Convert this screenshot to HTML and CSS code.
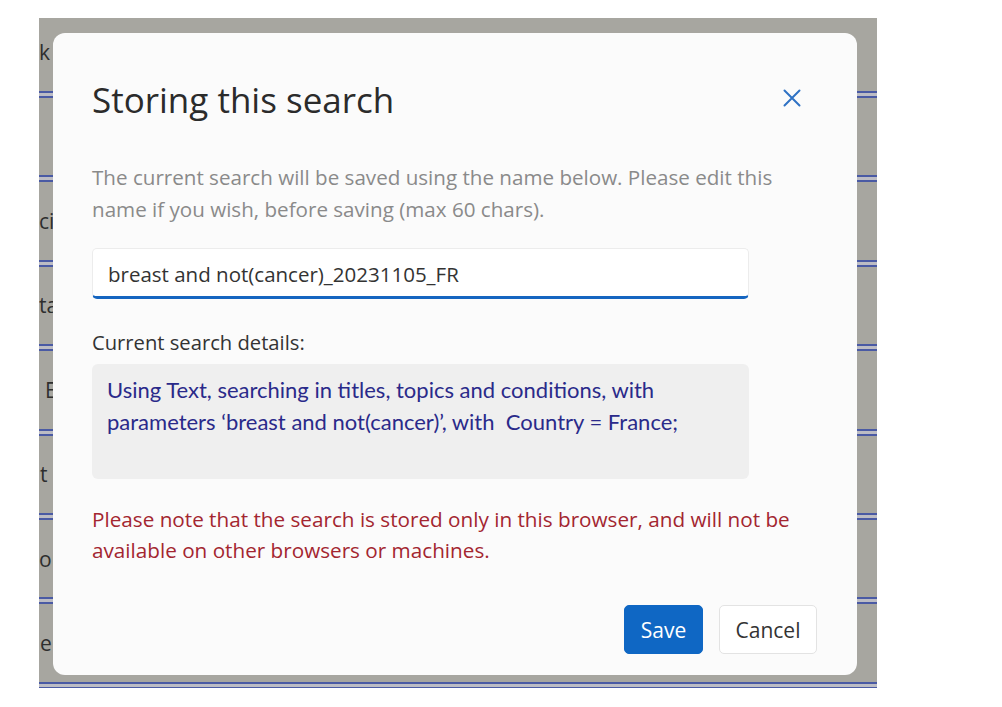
FILE: index.html
```html
<!DOCTYPE html>
<html lang="en">
<head>
<meta charset="utf-8">
<title>Storing this search</title>
<link rel="stylesheet" href="styles.css">
</head>
<body>
<div class="backdrop">
  <div class="bg-row first"><span class="bg-text k">k</span></div>
  <div class="rule"></div>
  <div class="bg-row"></div>
  <div class="rule"></div>
  <div class="bg-row"><span class="bg-text">ci</span></div>
  <div class="rule"></div>
  <div class="bg-row"><span class="bg-text">ta</span></div>
  <div class="rule"></div>
  <div class="bg-row"><span class="bg-text e">E</span></div>
  <div class="rule"></div>
  <div class="bg-row"><span class="bg-text t">t</span></div>
  <div class="rule"></div>
  <div class="bg-row"><span class="bg-text on">on</span></div>
  <div class="rule"></div>
  <div class="bg-row"><span class="bg-text t">e<i class="mark"></i></span></div>
  <div class="rule"></div>

  <div class="modal" role="dialog" aria-labelledby="dlg-title">
    <div class="modal-head">
      <h2 id="dlg-title" class="modal-title">Storing this search</h2>
      <button class="close-btn" aria-label="Close">
        <svg width="20" height="20" viewBox="0 0 20 20"><path d="M2.5 2.5 L17.5 17.5 M17.5 2.5 L2.5 17.5" stroke="#2f72c4" stroke-width="2" fill="none" stroke-linecap="round"/></svg>
      </button>
    </div>
    <p class="intro">The current search will be saved using the name below. Please edit this name if you wish, before saving (max 60 chars).</p>
    <input class="name-input" type="text" value="breast and not(cancer)_20231105_FR" maxlength="60">
    <div class="details-label">Current search details:</div>
    <div class="details-box">Using Text, searching in titles, topics and conditions, with parameters ‘breast and not(cancer)’, with&nbsp; Country = France;</div>
    <p class="note">Please note that the search is stored only in this browser, and will not be available on other browsers or machines.</p>
    <div class="actions">
      <button class="btn btn-primary">Save</button>
      <button class="btn btn-secondary">Cancel</button>
    </div>
  </div>
</div>
</body>
</html>
```

FILE: styles.css
```css
html, body {
  margin: 0;
  padding: 0;
  background: #ffffff;
}
body {
  padding: 18px 0 0 39px;
  font-family: "Open Sans", "Noto Sans", "Liberation Sans", sans-serif;
}
.backdrop {
  position: relative;
  width: 838px;
  height: 670px;
  overflow: hidden;
  background: #a7a6a0;
}
.bg-row {
  height: 77.4px;
  display: flex;
  align-items: center;
  font-size: 21px;
  color: #2e2e2e;
  white-space: nowrap;
}
.bg-row.first {
  height: 73px;
}
.bg-text {
  display: inline-block;
}
.bg-text.k {
  margin-top: -6px;
}
.bg-text.e {
  padding-left: 6px;
}
.bg-text.t {
  padding-left: 1px;
}
.mark {
  display: inline-block;
  width: 4px;
  height: 14px;
  margin-left: 2px;
  background: #b9a46a;
}
.rule {
  height: 3px;
  border-top: 2px solid #4a5aa4;
  border-bottom: 2px solid #4a5aa4;
  background: #bcbcc4;
}
.modal {
  position: absolute;
  left: 14px;
  top: 15px;
  width: 804px;
  height: 642px;
  box-sizing: border-box;
  background: #fbfbfb;
  border-radius: 12px;
  padding: 43px 40px 21px 39px;
  display: flex;
  flex-direction: column;
  color: #333333;
}
.modal-head {
  display: flex;
  align-items: center;
  justify-content: space-between;
  padding-right: 15px;
}
.modal-title {
  margin: 0;
  font-size: 35px;
  line-height: 47px;
  font-weight: 400;
  color: #2b2b2b;
}
.close-btn {
  border: 0;
  background: transparent;
  padding: 0;
  width: 20px;
  height: 20px;
  margin-top: -3px;
  cursor: pointer;
}
.intro {
  margin: 38px 0 0;
  font-size: 20.6px;
  line-height: 32px;
  color: #8a8a8a;
  width: 710px;
}
.name-input {
  margin-top: 23px;
  width: 657px;
  height: 51px;
  box-sizing: border-box;
  border: 1px solid #ececec;
  border-bottom: 3px solid #1565c0;
  border-radius: 5px;
  background: #ffffff;
  padding: 2px 15px 0;
  font-family: inherit;
  font-size: 20.5px;
  color: #333333;
  outline: none;
}
.details-label {
  margin-top: 27px;
  font-size: 20.2px;
  line-height: 32px;
  color: #333333;
}
.details-box {
  margin-top: 6px;
  width: 657px;
  height: 115px;
  box-sizing: border-box;
  padding: 10px 15px;
  background: #efefef;
  border-radius: 6px;
  font-family: "Lato", "Open Sans", sans-serif;
  font-size: 22px;
  line-height: 32px;
  color: #2a2a8a;
}
.note {
  margin: 25px 0 0;
  font-size: 20.7px;
  line-height: 31px;
  color: #a32630;
  width: 730px;
}
.actions {
  margin-top: auto;
  display: flex;
  justify-content: flex-end;
  gap: 16px;
}
.btn {
  height: 49px;
  border-radius: 5px;
  font-family: inherit;
  font-size: 21px;
  cursor: pointer;
  box-sizing: border-box;
}
.btn-primary {
  width: 79px;
  background: #0f67c4;
  color: #ffffff;
  border: 1px solid #0f67c4;
}
.btn-secondary {
  width: 98px;
  background: #ffffff;
  color: #333333;
  border: 1px solid #e3e3e3;
}
```
